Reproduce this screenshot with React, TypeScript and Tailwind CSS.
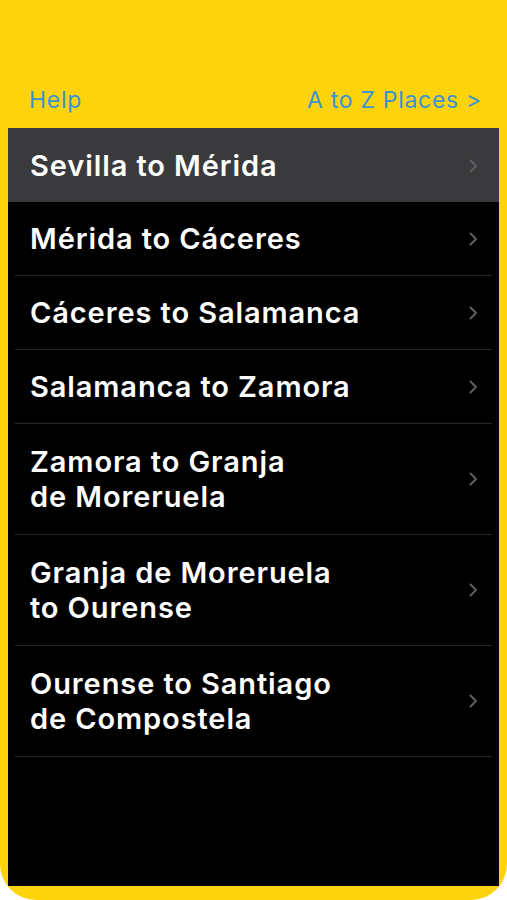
const routes = [
  ["Sevilla to Mérida"],
  ["Mérida to Cáceres"],
  ["Cáceres to Salamanca"],
  ["Salamanca to Zamora"],
  ["Zamora to Granja", "de Moreruela"],
  ["Granja de Moreruela", "to Ourense"],
  ["Ourense to Santiago", "de Compostela"],
];

function Chevron() {
  return (
    <svg width="10" height="16" viewBox="0 0 10 16" className="shrink-0">
      <path d="M2.5 2.5 L8 8 L2.5 13.5" fill="none" stroke="#5e5e60" strokeWidth="2" strokeLinecap="round" strokeLinejoin="round" />
    </svg>
  );
}

export default function App() {
  return (
    <div className="h-[900px] w-[507px] overflow-hidden bg-white font-['Inter',sans-serif]">
      <div className="flex h-full flex-col rounded-b-[36px] bg-[#fdd40b] px-2 pb-[14px] pt-[84px]">
        <header className="flex h-[44px] items-start justify-between pl-[21px] pr-[17px] text-[23px] leading-[32px] tracking-[0.7px] text-[#3a93d3]">
          <span>Help</span>
          <span>A to Z Places &gt;</span>
        </header>

        <main className="flex-1 bg-black">
          {routes.map((lines, i) => (
            <div
              key={i}
              className={
                i === 0
                  ? "flex items-center justify-between bg-[#3a3a3c] pb-[19px] pl-[22px] pr-[21px] pt-[20px]"
                  : lines.length > 1
                    ? "mx-[7px] flex items-center justify-between border-b border-[#29292b] py-[20px] pl-[15px] pr-[14px]"
                    : "mx-[7px] flex items-center justify-between border-b border-[#29292b] py-[19px] pl-[15px] pr-[14px]"
              }
            >
              <div className="text-[29px] font-semibold leading-[35px] tracking-[0.9px] text-white">
                {lines.map((l) => (
                  <div key={l}>{l}</div>
                ))}
              </div>
              <Chevron />
            </div>
          ))}
        </main>
      </div>
    </div>
  );
}
